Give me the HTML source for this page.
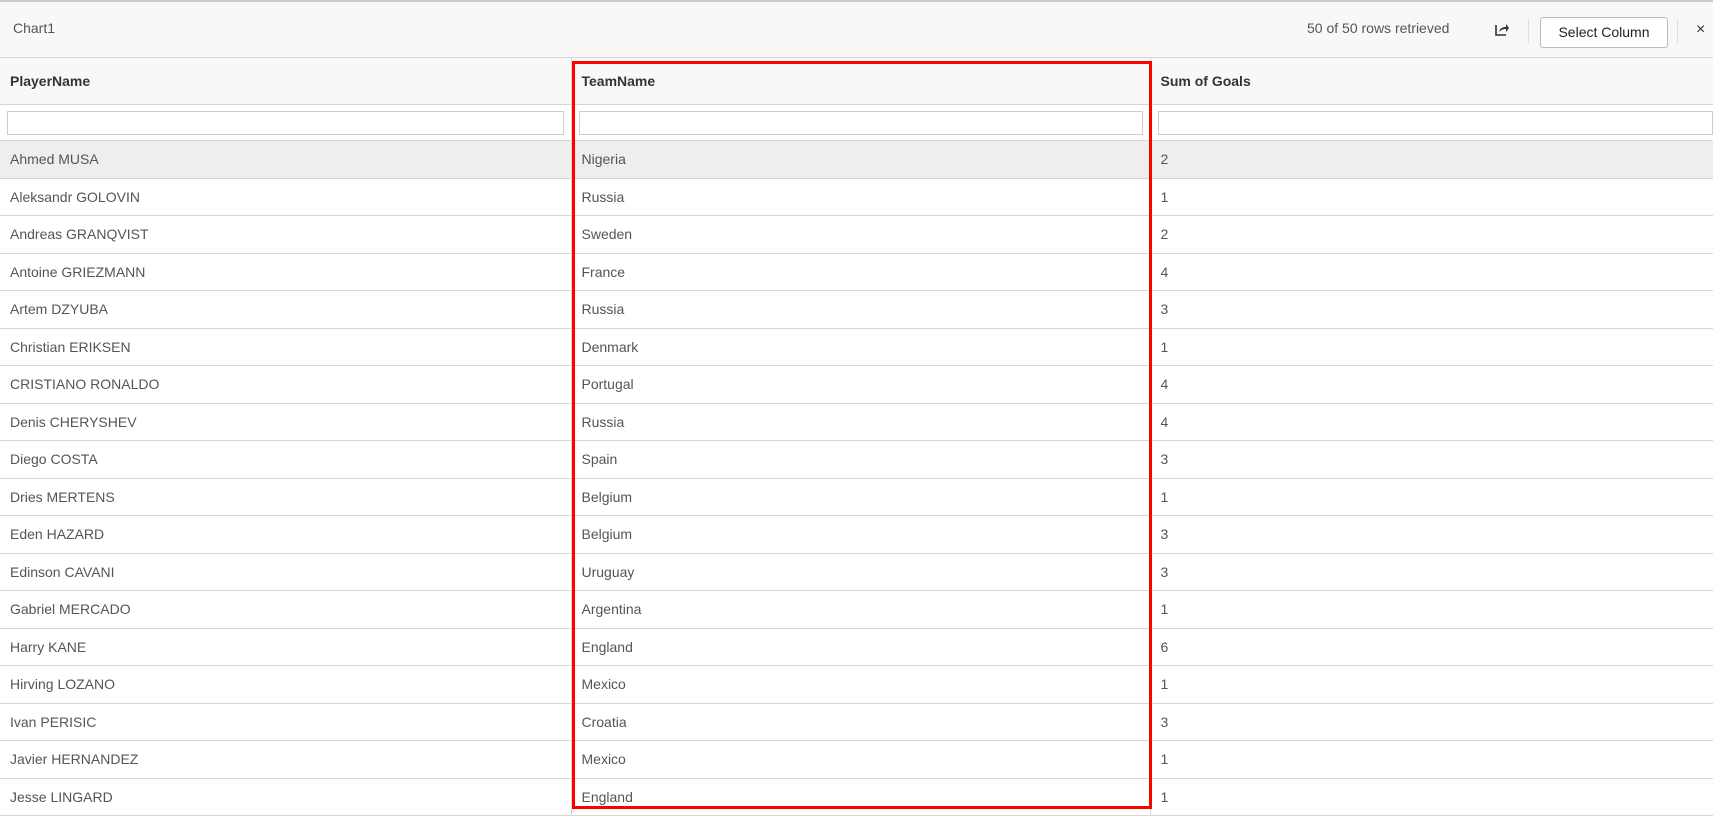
<!DOCTYPE html><html><head><style>
body{margin:0;width:1713px;height:812px;overflow:hidden;background:#fff;font-family:"Liberation Sans",sans-serif;color:#333}
.top{position:absolute;left:0;top:0;width:1713px;height:58px;background:#f8f8f8;border-top:2px solid #ccc;border-bottom:1px solid #d8d8d8;box-sizing:border-box}
.t{position:absolute;font-size:14px;color:#555}
.btn{position:absolute;left:1540px;top:15px;width:128px;height:31px;border:1px solid #bbb;border-radius:3px;background:#fff;box-sizing:border-box;font-size:14px;text-align:center;line-height:29px;color:#222}
.sep{position:absolute;top:17px;width:1px;height:24px;background:#ddd}
table{position:absolute;left:0;top:58px;border-collapse:collapse;width:1713px;table-layout:fixed}
td{border-bottom:1px solid #d6d6d6;border-left:1px solid #d6d6d6;height:36.5px;padding:0 0 0 10px;font-size:14px;color:#555;white-space:nowrap}
td:first-child{border-left:none}
tr.h td{background:#f8f8f8;height:46px;font-weight:bold;color:#333}
tr.f td{height:35px;background:#fff;padding:0 7px}
tr.f div{height:22px;border:1px solid #ccc}
tr.s td{background:#eee}
.red{position:absolute;left:572px;top:61px;width:580px;height:748px;border:3px solid #f00;box-sizing:border-box}
</style></head><body>
<div class="top">
<div class="t" style="left:13px;top:18px">Chart1</div>
<div class="t" style="left:1307px;top:18px">50 of 50 rows retrieved</div>
<svg style="position:absolute;left:1494px;top:19px" width="16" height="16" viewBox="0 0 16 16"><path d="M2 4v10h10" fill="none" stroke="#333" stroke-width="1.6"/><path d="M5 11c1-4 4-5 7-5V3l3 4-3 4V8c-3 0-5 1-7 3z" fill="#333"/></svg>
<div class="sep" style="left:1528px"></div>
<div class="btn">Select Column</div>
<div class="sep" style="left:1677px"></div>
<div class="t" style="left:1696px;top:19px;font-size:16px;color:#333">×</div>
</div>
<table>
<colgroup><col style="width:571px"><col style="width:579px"><col></colgroup>
<tr class="h"><td>PlayerName</td><td>TeamName</td><td>Sum of Goals</td></tr>
<tr class="f"><td><div></div></td><td><div></div></td><td style="padding-right:0"><div></div></td></tr>
<tr class="s"><td>Ahmed MUSA</td><td>Nigeria</td><td>2</td></tr>
<tr><td>Aleksandr GOLOVIN</td><td>Russia</td><td>1</td></tr>
<tr><td>Andreas GRANQVIST</td><td>Sweden</td><td>2</td></tr>
<tr><td>Antoine GRIEZMANN</td><td>France</td><td>4</td></tr>
<tr><td>Artem DZYUBA</td><td>Russia</td><td>3</td></tr>
<tr><td>Christian ERIKSEN</td><td>Denmark</td><td>1</td></tr>
<tr><td>CRISTIANO RONALDO</td><td>Portugal</td><td>4</td></tr>
<tr><td>Denis CHERYSHEV</td><td>Russia</td><td>4</td></tr>
<tr><td>Diego COSTA</td><td>Spain</td><td>3</td></tr>
<tr><td>Dries MERTENS</td><td>Belgium</td><td>1</td></tr>
<tr><td>Eden HAZARD</td><td>Belgium</td><td>3</td></tr>
<tr><td>Edinson CAVANI</td><td>Uruguay</td><td>3</td></tr>
<tr><td>Gabriel MERCADO</td><td>Argentina</td><td>1</td></tr>
<tr><td>Harry KANE</td><td>England</td><td>6</td></tr>
<tr><td>Hirving LOZANO</td><td>Mexico</td><td>1</td></tr>
<tr><td>Ivan PERISIC</td><td>Croatia</td><td>3</td></tr>
<tr><td>Javier HERNANDEZ</td><td>Mexico</td><td>1</td></tr>
<tr><td>Jesse LINGARD</td><td>England</td><td>1</td></tr>
</table>
<div class="red"></div>
</body></html>
